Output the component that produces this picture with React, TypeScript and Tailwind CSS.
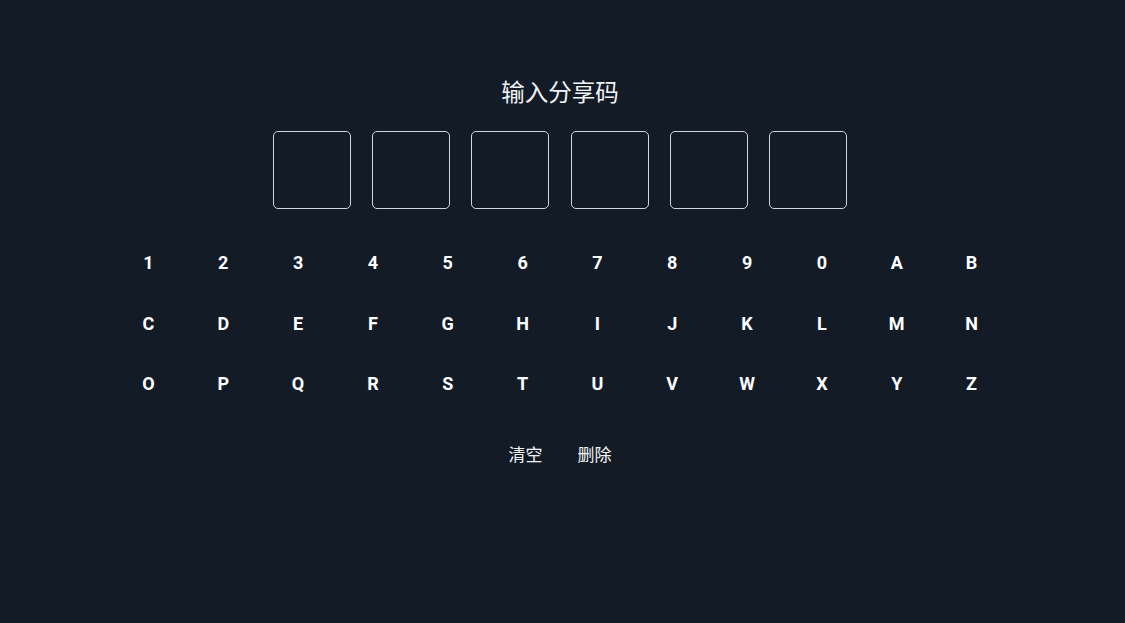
const KEYS = '1234567890ABCDEFGHIJKLMNOPQRSTUVWXYZ'.split('')

export default function App() {
  return (
    <div
      className="flex h-[623px] w-full flex-col items-center bg-[#131b27] pr-[5px] pt-[76px] text-white"
      style={{ fontFamily: 'Roboto, "Noto Sans CJK SC", sans-serif' }}
    >
      <h1 className="text-[23.5px] leading-[30px] text-gray-100" style={{ fontFamily: '"Noto Sans CJK SC", sans-serif' }}>
        输入分享码
      </h1>

      <div className="mt-[25px] flex gap-[21.4px]">
        {Array.from({ length: 6 }).map((_, i) => (
          <div key={i} className="h-[78px] w-[78px] rounded-[5px] border border-gray-300" />
        ))}
      </div>

      <div className="mt-[24px] grid w-[898px] grid-cols-12">
        {KEYS.map((k) => (
          <button
            key={k}
            className="flex h-[60.5px] items-center justify-center text-lg font-bold text-white"
          >
            {k}
          </button>
        ))}
      </div>

      <div
        className="mt-[25px] flex gap-[35px] text-[17px] leading-7 text-gray-100"
        style={{ fontFamily: '"Noto Sans CJK SC", sans-serif' }}
      >
        <button>清空</button>
        <button>删除</button>
      </div>
    </div>
  )
}
